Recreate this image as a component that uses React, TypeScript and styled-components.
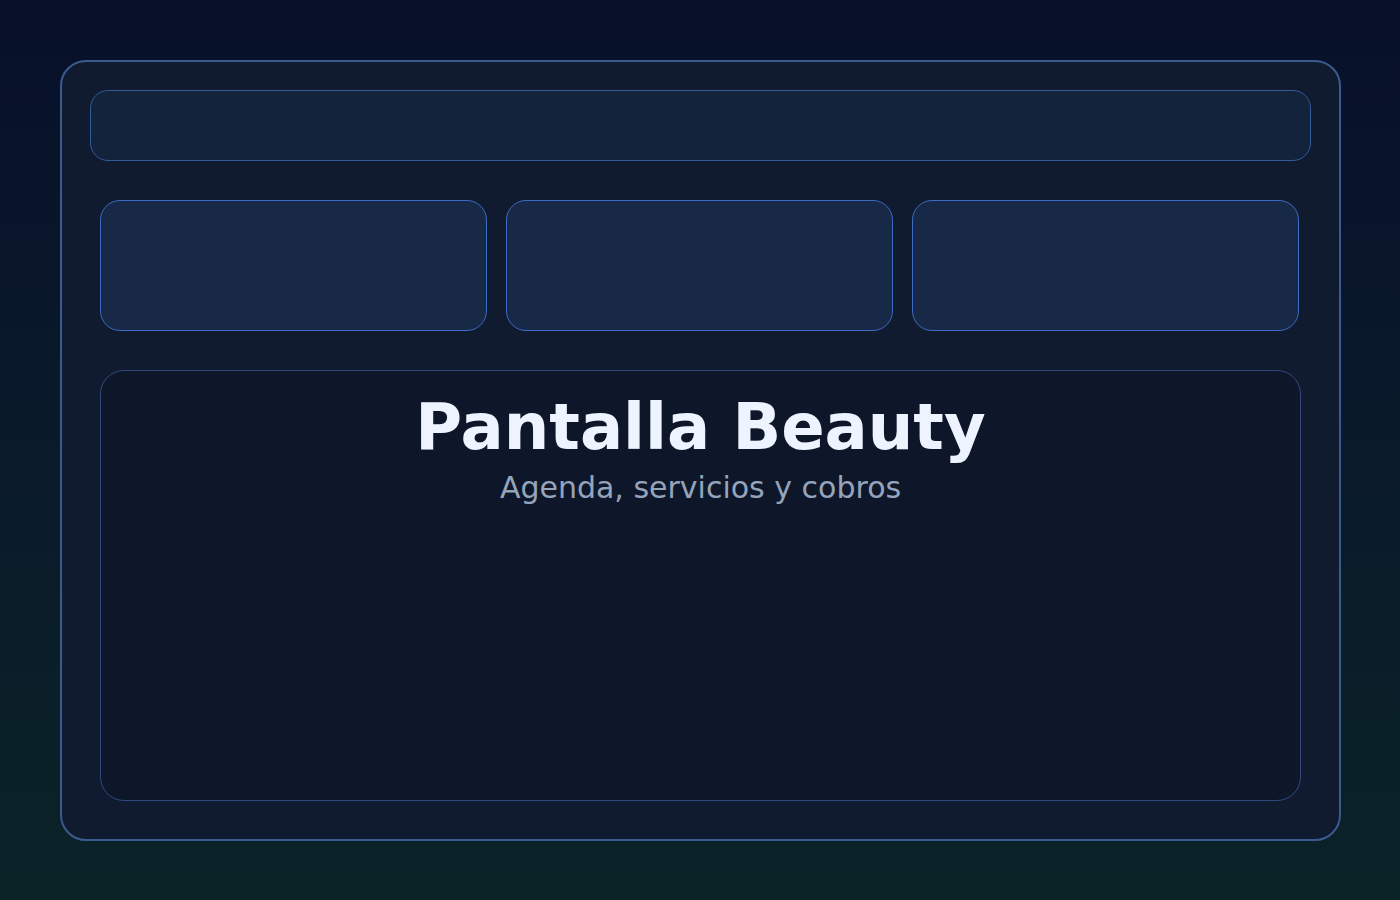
import React from 'react';
import styled, { createGlobalStyle } from 'styled-components';

const GlobalStyle = createGlobalStyle`
  html, body {
    margin: 0;
    padding: 0;
    height: 100%;
  }

  body {
    font-family: 'DejaVu Sans', 'Liberation Sans', sans-serif;
    background: linear-gradient(180deg, #08102a 0%, #0a1a2a 50%, #0a2327 100%);
  }
`;

const Page = styled.div`
  width: 1400px;
  height: 900px;
  box-sizing: border-box;
  padding: 60px;
`;

const Frame = styled.div`
  box-sizing: border-box;
  width: 1281px;
  height: 781px;
  display: flex;
  flex-direction: column;
  padding: 28px 28px 0;
  border: 2px solid #3b5a8e;
  border-radius: 26px;
  background: #111b30;
`;

const TopBar = styled.div`
  height: 71px;
  box-sizing: border-box;
  border: 1px solid #345a9a;
  border-radius: 18px;
  background: #14233c;
`;

const CardRow = styled.div`
  display: grid;
  grid-template-columns: repeat(3, 387px);
  gap: 19px;
  margin: 39px 10px 0;
`;

const Card = styled.div`
  height: 131px;
  box-sizing: border-box;
  border: 1px solid #3b6bc2;
  border-radius: 20px;
  background: #172947;
`;

const Main = styled.section`
  height: 431px;
  box-sizing: border-box;
  margin: 39px 10px 0;
  border: 1px solid #2e4a7c;
  border-radius: 24px;
  background: #0e1729;
  display: flex;
  flex-direction: column;
  align-items: center;
  padding-top: 18px;
`;

const Title = styled.h1`
  margin: 0;
  font-family: 'DejaVu Sans', sans-serif;
  font-weight: 700;
  font-size: 64px;
  line-height: 76px;
  color: #eef4ff;
`;

const Subtitle = styled.p`
  margin: 5px 0 0;
  font-family: 'DejaVu Sans', sans-serif;
  font-size: 30px;
  line-height: 36px;
  color: #95a4bb;
`;

export default function App() {
  return (
    <>
      <GlobalStyle />
      <Page>
        <Frame>
          <TopBar />
          <CardRow>
            <Card />
            <Card />
            <Card />
          </CardRow>
          <Main>
            <Title>Pantalla Beauty</Title>
            <Subtitle>Agenda, servicios y cobros</Subtitle>
          </Main>
        </Frame>
      </Page>
    </>
  );
}
